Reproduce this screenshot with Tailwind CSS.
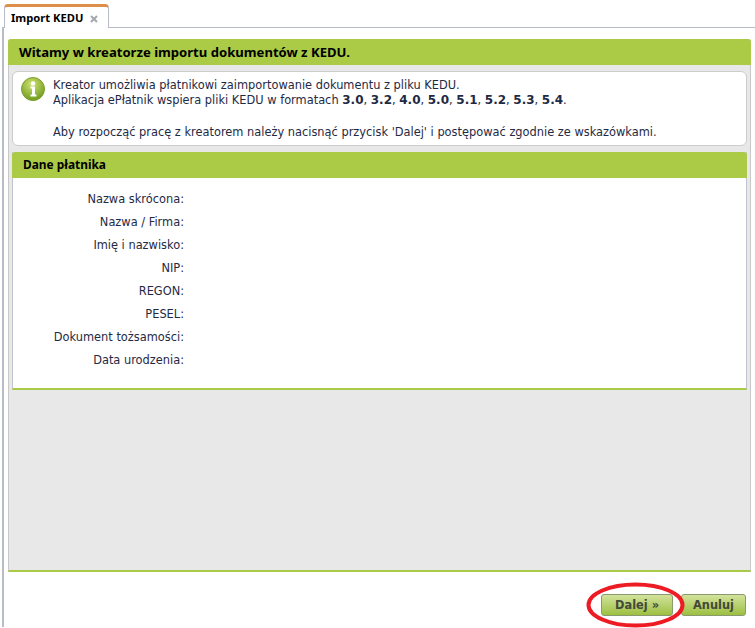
<!DOCTYPE html>
<html><head><meta charset="utf-8"><script src="https://cdn.jsdelivr.net/npm/@tailwindcss/browser@4"></script></head>
<body class="m-0 bg-white">
<div class="relative w-[755px] h-[628px] overflow-hidden bg-white font-['DejaVu_Sans',sans-serif] text-[11.4px] leading-[15px] text-[#1f2a44]">
  <div class="h-[27px] pl-[4px] pt-[4px] flex">
    <div class="w-[105px] h-[24px] z-10 bg-white border border-b-0 border-[#b8bcc8] border-t-[3px] border-t-[#dd8f4a] rounded-t-[4px] flex items-center pl-[6px] gap-[7px] font-['Noto_Sans',sans-serif] text-[11.2px] font-bold text-black">
      <span>Import KEDU</span>
      <svg width="8" height="8" viewBox="0 0 8 8" class="mt-[2px]"><path d="M1 1l6 6M7 1l-6 6" stroke="#a4a8ae" stroke-width="2"/></svg>
    </div>
  </div>
  <div class="h-[600px] ml-[2px] border-l-2 border-t border-[#b8bcc8] pl-[4px] pr-[4px] pt-[11px] pb-[55px] flex flex-col">
    <div class="flex-1 flex flex-col bg-[#e8e8e8] border-b-2 border-[#a9ca45] border-r border-r-[#c8c8c8] border-l border-l-[#c8c8c8] rounded-t-[3px]">
      <div class="h-[26px] bg-[#abca45] -mx-px rounded-t-[3px] px-[11px] flex items-center font-['Noto_Sans',sans-serif] text-[13.1px] font-bold text-black">Witamy w kreatorze importu dokumentów z KEDU.</div>
      <div class="mx-[3px] mt-[6px] h-[75px] bg-white border border-[#cccccc] rounded-[6px] pl-[7px] pt-[6px] flex gap-[7px]">
        <svg width="26" height="26" viewBox="0 0 26 26" class="shrink-0 -mt-[2px]"><defs><radialGradient id="g" cx="45%" cy="30%" r="75%"><stop offset="0" stop-color="#cfe372"/><stop offset="1" stop-color="#6a9618"/></radialGradient></defs><circle cx="13" cy="13" r="11.5" fill="url(#g)" stroke="#7d9f2c"/><circle cx="13" cy="7.500" r="2.300" fill="#fff"/><path d="M10.500 10.500h4.500v8h1.500v2h-6v-2h1.500v-6h-1.500z" fill="#fff"/></svg>
        <div>
          <p>Kreator umożliwia płatnikowi zaimportowanie dokumentu z pliku KEDU.</p>
          <p>Aplikacja ePłatnik wspiera pliki KEDU w formatach <b class="text-[12px]">3.0</b>, <b class="text-[12px]">3.2</b>, <b class="text-[12px]">4.0</b>, <b class="text-[12px]">5.0</b>, <b class="text-[12px]">5.1</b>, <b class="text-[12px]">5.2</b>, <b class="text-[12px]">5.3</b>, <b class="text-[12px]">5.4</b>.</p>
          <p class="mt-[17px]">Aby rozpocząć pracę z kreatorem należy nacisnąć przycisk 'Dalej' i postępować zgodnie ze wskazówkami.</p>
        </div>
      </div>
      <div class="mx-[3px] mt-[6px] h-[238px] bg-white border-x border-[#c0c4d0] border-b-2 border-b-[#a9ca45] flex flex-col">
        <div class="h-[26px] -mx-px bg-[#abca45] rounded-t-[3px] px-[11px] pb-px flex items-center font-['Noto_Sans',sans-serif] text-[11.9px] font-bold text-black">Dane płatnika</div>
        <div class="pt-[14px] flex flex-col gap-[8px]">
          <div class="w-[171px] text-right">Nazwa skrócona:</div>
          <div class="w-[171px] text-right">Nazwa / Firma:</div>
          <div class="w-[171px] text-right">Imię i nazwisko:</div>
          <div class="w-[171px] text-right">NIP:</div>
          <div class="w-[171px] text-right">REGON:</div>
          <div class="w-[171px] text-right">PESEL:</div>
          <div class="w-[171px] text-right">Dokument tożsamości:</div>
          <div class="w-[171px] text-right">Data urodzenia:</div>
        </div>
      </div>
    </div>
  </div>
  <div class="absolute left-[601px] top-[594px] flex gap-[8px] font-bold text-[11.4px] text-[#444a3a]">
    <button class="w-[72px] h-[22px] rounded-[3px] border border-[#8a9a70] bg-gradient-to-b from-[#d3e39a] to-[#9dbf3f]">Dalej »</button>
    <button class="w-[65px] h-[22px] rounded-[3px] border border-[#8a9a70] bg-gradient-to-b from-[#d3e39a] to-[#9dbf3f]">Anuluj</button>
  </div>
  <svg class="absolute left-[585px] top-[581px]" width="102" height="47" viewBox="0 0 102 47"><ellipse cx="50.500" cy="24" rx="47" ry="20.500" fill="none" stroke="#ed1c24" stroke-width="4"/></svg>
</div>
</body></html>
